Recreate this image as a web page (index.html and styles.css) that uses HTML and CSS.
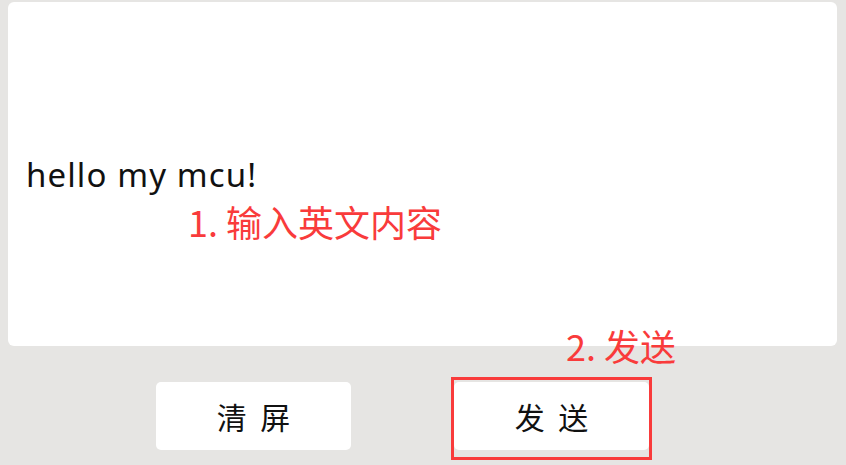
FILE: index.html
```html
<!DOCTYPE html>
<html lang="zh">
<head>
<meta charset="utf-8">
<title>串口发送</title>
<link rel="stylesheet" href="styles.css">
</head>
<body>
<div class="screen">
  <div class="panel">
    <div class="content">hello my mcu!</div>
    <div class="note note-1">1. 输入英文内容</div>
  </div>
  <div class="actions">
    <div class="btn">清 屏</div>
    <div class="btn send">
      发 送
      <div class="mark"></div>
      <div class="note note-2">2. 发送</div>
    </div>
  </div>
</div>
</body>
</html>
```
FILE: styles.css
```css
html, body {
  margin: 0;
  padding: 0;
}
body {
  width: 846px;
  height: 465px;
  overflow: hidden;
  background: #e6e5e3;
  font-family: "Noto Sans", "Noto Sans CJK SC", sans-serif;
}
.screen {
  display: flex;
  flex-direction: column;
  padding: 2px 9px 0 8px;
}
.panel {
  position: relative;
  height: 344px;
  background: #ffffff;
  border-radius: 6px;
  display: flex;
  flex-direction: column;
  justify-content: center;
  padding-left: 18px;
}
.content {
  font-size: 33px;
  letter-spacing: 1.1px;
  color: #111;
  line-height: 40px;
  margin-top: 2px;
}
.note {
  position: absolute;
  color: #f93b3b;
  font-family: "Noto Sans CJK SC", sans-serif;
  font-size: 36px;
  line-height: 40px;
  white-space: nowrap;
}
.note-1 {
  left: 180px;
  top: 199px;
}
.actions {
  display: flex;
  gap: 103px;
  padding-left: 148px;
  margin-top: 36px;
}
.btn {
  position: relative;
  width: 195px;
  height: 68px;
  background: #ffffff;
  border-radius: 5px;
  display: flex;
  align-items: center;
  justify-content: center;
  font-family: "Noto Sans CJK SC", sans-serif;
  font-size: 30px;
  color: #111;
  letter-spacing: 3.5px;
  text-indent: 3.5px;
}
.mark {
  position: absolute;
  left: -3px;
  right: -3px;
  top: -5px;
  bottom: -10px;
  border: 3px solid #f93b3b;
}
.note-2 {
  left: 112px;
  top: -57px;
  letter-spacing: 0;
  text-indent: 0;
}
```
